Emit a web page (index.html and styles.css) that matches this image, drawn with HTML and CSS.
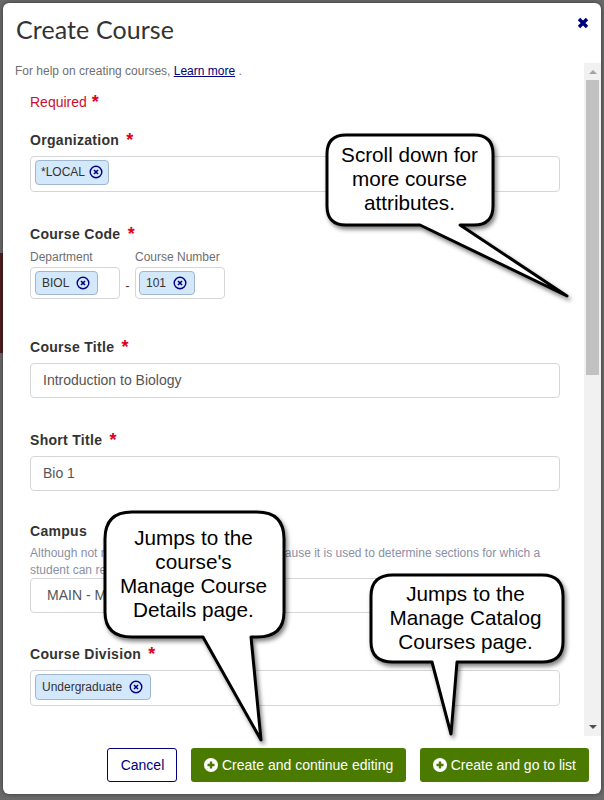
FILE: index.html
```html
<!DOCTYPE html>
<html lang="en">
<head>
    <meta charset="UTF-8">
    <meta name="viewport" content="width=device-width, initial-scale=1.0">
    <title>Create Course</title>
    <link rel="stylesheet" href="styles.css">
</head>
<body>

<div class="modal">
    <div class="modal-header">
        <h1>Create Course</h1>
        <svg class="close-icon" viewBox="0 0 12 12"><path d="M2 2L10 10M10 2L2 10"/></svg>
    </div>

    <div class="modal-main">
        <div class="modal-body">
            <p class="help">For help on creating courses, <a href="#">Learn more</a> .</p>
            <p class="required">Required <span class="star star-required">*</span></p>

            <div class="field field-org">
                <label>Organization <span class="star">*</span></label>
                <div class="tag-input">
                    <span class="chip chip-tight">*LOCAL <svg class="chip-x" viewBox="0 0 14 14"><circle cx="7" cy="7" r="5.8"/><path d="M5 5L9 9M9 5L5 9"/></svg></span>
                </div>
            </div>

            <div class="field">
                <label>Course Code <span class="star">*</span></label>
                <div class="code-row">
                    <div class="code-part">
                        <span class="sublabel">Department</span>
                        <div class="tag-input small">
                            <span class="chip">BIOL <svg class="chip-x" viewBox="0 0 14 14"><circle cx="7" cy="7" r="5.8"/><path d="M5 5L9 9M9 5L5 9"/></svg></span>
                        </div>
                    </div>
                    <span class="dash">-</span>
                    <div class="code-part">
                        <span class="sublabel">Course Number</span>
                        <div class="tag-input small number">
                            <span class="chip">101 <svg class="chip-x" viewBox="0 0 14 14"><circle cx="7" cy="7" r="5.8"/><path d="M5 5L9 9M9 5L5 9"/></svg></span>
                        </div>
                    </div>
                </div>
            </div>

            <div class="field field-title">
                <label>Course Title <span class="star">*</span></label>
                <div class="text-input">Introduction to Biology</div>
            </div>

            <div class="field">
                <label>Short Title <span class="star">*</span></label>
                <div class="text-input">Bio 1</div>
            </div>

            <div class="field field-campus">
                <label class="label-tight">Campus</label>
                <p class="hint">Although not required, this is recommended because it is used to determine sections for which a student can register.</p>
                <div class="text-input select">MAIN - Main Campus</div>
            </div>

            <div class="field field-division">
                <label>Course Division <span class="star">*</span></label>
                <div class="tag-input">
                    <span class="chip chip-tall">Undergraduate <svg class="chip-x" viewBox="0 0 14 14"><circle cx="7" cy="7" r="5.8"/><path d="M5 5L9 9M9 5L5 9"/></svg></span>
                </div>
            </div>
        </div>

        <div class="scrollbar">
            <span class="arrow-up"></span>
            <div class="track"><div class="thumb"></div></div>
            <span class="arrow-down"></span>
        </div>
    </div>

    <div class="modal-footer">
        <button class="btn btn-cancel">Cancel</button>
        <button class="btn btn-green btn-continue"><svg class="plus-icon" viewBox="0 0 14 14"><circle cx="7" cy="7" r="7"/><path d="M7 3.5V10.5M3.5 7H10.5"/></svg>Create and continue editing</button>
        <button class="btn btn-green"><svg class="plus-icon" viewBox="0 0 14 14"><circle cx="7" cy="7" r="7"/><path d="M7 3.5V10.5M3.5 7H10.5"/></svg>Create and go to list</button>
    </div>
</div>

<!-- Annotations drawn over the screenshot -->
<svg class="callouts" viewBox="0 0 604 800">
    <path class="bubble" d="M346 135H474Q493 135 493 154V206Q493 225 474 225H460L567 296L420 225H346Q327 225 327 206V154Q327 135 346 135Z"/>
    <text x="409.5" y="162">Scroll down for</text>
    <text x="409.5" y="186">more course</text>
    <text x="409.5" y="210">attributes.</text>

    <path class="bubble" d="M132 512H257Q284 512 284 539V612Q284 637 257 637H251L261 740L203 637H132Q105 637 105 612V539Q105 512 132 512Z"/>
    <text x="193.5" y="545">Jumps to the</text>
    <text x="193.5" y="569">course's</text>
    <text x="193.5" y="593">Manage Course</text>
    <text x="193.5" y="617">Details page.</text>

    <path class="bubble" d="M393 575H542Q563 575 563 596V642Q563 662 542 662H457L451 734L432 662H393Q371 662 371 642V596Q371 575 393 575Z"/>
    <text x="465.5" y="601">Jumps to the</text>
    <text x="465.5" y="625">Manage Catalog</text>
    <text x="465.5" y="649">Courses page.</text>
</svg>

</body>
</html>
```

FILE: styles.css
```css
html, body {
    margin: 0;
    height: 100%;
}

body {
    font-family: "Liberation Sans", Arial, sans-serif;
    background: #6a6a6a linear-gradient(to bottom,
        #6a6a6a 0, #6a6a6a 253px,
        #4e1e20 253px, #4e1e20 353px,
        #6a6a6a 353px, #6a6a6a 100%) no-repeat left top / 3px 100%;
    color: #333;
    padding: 3px 3px 6px 3px;
    box-sizing: border-box;
    overflow: hidden;
}

.modal {
    width: 598px;
    height: 791px;
    background: #fff;
    border-radius: 6px;
    box-shadow: 0 0 4px rgba(0, 0, 0, 0.5);
    display: flex;
    flex-direction: column;
}

.modal-header {
    height: 60px;
    flex: none;
    padding: 0 13px;
    display: flex;
    justify-content: space-between;
}

.modal-header h1 {
    margin: 12px 0 0;
    font-family: Lato, sans-serif;
    font-weight: 400;
    font-size: 25px;
    line-height: 28px;
    letter-spacing: 0.1px;
    color: #333;
}

.close-icon {
    width: 12px;
    height: 12px;
    margin: 14px -1px 0 0;
}

.close-icon path {
    stroke: #000080;
    stroke-width: 3.4;
    fill: none;
}

.modal-main {
    height: 673px;
    flex: none;
    display: flex;
}

.modal-body {
    flex: 1;
    overflow: hidden;
    padding: 0 0 0 27px;
}

.help {
    margin: 0 0 0 -15px;
    padding-top: 1px;
    font-size: 12px;
    line-height: 14px;
    color: #6f6f6f;
}

.help a {
    color: #000080;
}

.required {
    margin: 15px 0 0;
    font-size: 14px;
    line-height: 18px;
    color: #c8102e;
}

.star {
    color: #e0001b;
    font-weight: bold;
    font-size: 18px;
    line-height: 14px;
    margin-left: 3px;
    position: relative;
    top: 1px;
}

.star-required {
    margin-left: 1px;
}

.field {
    width: 530px;
    margin-top: 33px;
}

.field-org {
    margin-top: 20px;
}

.field-title {
    margin-top: 39px;
}

.field-campus {
    margin-top: 31px;
}

.field-division {
    margin-top: 32px;
}

.field label {
    display: block;
    height: 18px;
    line-height: 18px;
    margin-bottom: 7px;
    font-size: 14px;
    font-weight: bold;
    letter-spacing: 0.3px;
    color: #333;
}

.field .label-tight {
    margin-bottom: 5px;
}

.tag-input {
    height: 36px;
    box-sizing: border-box;
    border: 1px solid #d4d6da;
    border-radius: 4px;
    padding: 3px 4px;
    display: flex;
    align-items: flex-start;
}

.tag-input.small {
    height: 32px;
    width: 90px;
}

.tag-input.number {
    padding-left: 3px;
}

.chip {
    height: 25px;
    box-sizing: border-box;
    display: inline-flex;
    align-items: center;
    gap: 7px;
    padding: 0 7px 2px 6px;
    background: #d3e8fb;
    border: 1px solid #9fb6cf;
    border-radius: 4px;
    font-size: 12px;
    color: #333;
}

.chip-tight {
    gap: 4px;
    padding-left: 5px;
    padding-right: 5px;
}

.chip-tall {
    height: 26px;
    padding-bottom: 1px;
}

.tag-input.small .chip {
    height: 24px;
    padding-bottom: 0;
}

.chip-x {
    width: 14px;
    height: 14px;
}

.chip-x circle {
    fill: none;
    stroke: #000080;
    stroke-width: 1.4;
}

.chip-x path {
    fill: none;
    stroke: #000080;
    stroke-width: 1.6;
}

.code-row {
    display: flex;
    align-items: flex-end;
    margin-top: -1px;
}

.code-part {
    display: flex;
    flex-direction: column;
}

.sublabel {
    font-size: 12px;
    line-height: 16px;
    margin-bottom: 2px;
    color: #6f6f6f;
}

.dash {
    width: 15px;
    text-align: center;
    font-size: 12px;
    line-height: 26px;
}

.text-input {
    height: 35px;
    box-sizing: border-box;
    border: 1px solid #d4d6da;
    border-radius: 4px;
    padding: 0 12px;
    font-size: 14px;
    line-height: 33px;
    color: #555;
}

.text-input.select {
    padding-left: 16px;
}

.hint {
    margin: 0 0 -1px;
    font-size: 12px;
    line-height: 17px;
    color: #8a8fa5;
}

.scrollbar {
    width: 17px;
    flex: none;
    background: #f1f1f1;
    display: flex;
    flex-direction: column;
    align-items: center;
}

.arrow-up,
.arrow-down {
    height: 17px;
    flex: none;
    width: 0;
    box-sizing: border-box;
    border-left: 4px solid transparent;
    border-right: 4px solid transparent;
}

.arrow-up {
    border-bottom: 4px solid #a3a3a3;
    border-top: 7px solid transparent;
    height: 11px;
    margin-bottom: 6px;
}

.arrow-down {
    border-top: 4px solid #505050;
    height: 4px;
    margin: 6px 0 7px;
}

.track {
    flex: 1;
    width: 100%;
    display: flex;
    justify-content: center;
}

.thumb {
    width: 13px;
    height: 295px;
    background: #c1c1c1;
}

.modal-footer {
    flex: 1;
    display: flex;
    justify-content: flex-end;
    align-items: flex-start;
    gap: 14px;
    padding: 12px 12px 0 0;
}

.btn {
    height: 34px;
    box-sizing: border-box;
    border-radius: 3px;
    font-family: "Liberation Sans", Arial, sans-serif;
    font-size: 14px;
    padding: 0;
    display: flex;
    align-items: center;
    justify-content: center;
}

.btn-cancel {
    width: 70px;
    background: #fff;
    border: 1px solid #000080;
    color: #000080;
}

.btn-green {
    background: #4a7a00;
    border: none;
    color: #fff;
    padding: 0 13px;
    gap: 4px;
}

.btn-continue {
    padding: 0 12.5px;
}

.plus-icon {
    width: 14px;
    height: 14px;
}

.plus-icon circle {
    fill: #fff;
}

.plus-icon path {
    stroke: #4a7a00;
    stroke-width: 2.4;
    fill: none;
}

.callouts {
    position: absolute;
    top: 0;
    left: 0;
    width: 604px;
    height: 800px;
}

.bubble {
    fill: #fff;
    stroke: #000;
    stroke-width: 3;
    stroke-linejoin: round;
    filter: drop-shadow(2px 3px 2px rgba(0, 0, 0, 0.5));
}

.callouts text {
    font-family: "Liberation Sans", Arial, sans-serif;
    font-size: 20.7px;
    fill: #000;
    text-anchor: middle;
}
```
